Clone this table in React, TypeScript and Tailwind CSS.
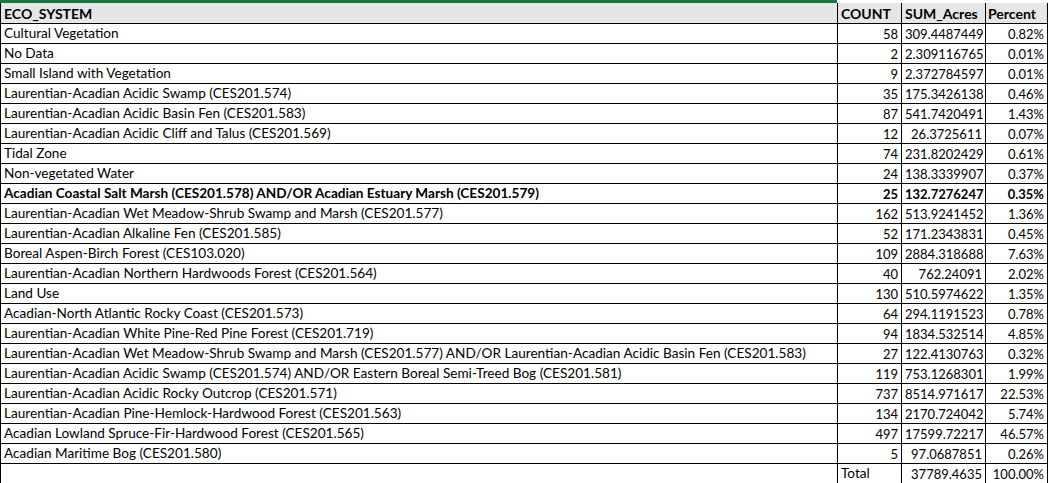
const rows: [string, number, string, string, boolean?][] = [
  ["Cultural Vegetation", 58, "309.4487449", "0.82%"],
  ["No Data", 2, "2.309116765", "0.01%"],
  ["Small Island with Vegetation", 9, "2.372784597", "0.01%"],
  ["Laurentian-Acadian Acidic Swamp (CES201.574)", 35, "175.3426138", "0.46%"],
  ["Laurentian-Acadian Acidic Basin Fen (CES201.583)", 87, "541.7420491", "1.43%"],
  ["Laurentian-Acadian Acidic Cliff and Talus (CES201.569)", 12, "26.3725611", "0.07%"],
  ["Tidal Zone", 74, "231.8202429", "0.61%"],
  ["Non-vegetated Water", 24, "138.3339907", "0.37%"],
  ["Acadian Coastal Salt Marsh (CES201.578) AND/OR Acadian Estuary Marsh (CES201.579)", 25, "132.7276247", "0.35%", true],
  ["Laurentian-Acadian Wet Meadow-Shrub Swamp and Marsh (CES201.577)", 162, "513.9241452", "1.36%"],
  ["Laurentian-Acadian Alkaline Fen (CES201.585)", 52, "171.2343831", "0.45%"],
  ["Boreal Aspen-Birch Forest (CES103.020)", 109, "2884.318688", "7.63%"],
  ["Laurentian-Acadian Northern Hardwoods Forest (CES201.564)", 40, "762.24091", "2.02%"],
  ["Land Use", 130, "510.5974622", "1.35%"],
  ["Acadian-North Atlantic Rocky Coast (CES201.573)", 64, "294.1191523", "0.78%"],
  ["Laurentian-Acadian White Pine-Red Pine Forest (CES201.719)", 94, "1834.532514", "4.85%"],
  ["Laurentian-Acadian Wet Meadow-Shrub Swamp and Marsh (CES201.577) AND/OR Laurentian-Acadian Acidic Basin Fen (CES201.583)", 27, "122.4130763", "0.32%"],
  ["Laurentian-Acadian Acidic Swamp (CES201.574) AND/OR Eastern Boreal Semi-Treed Bog (CES201.581)", 119, "753.1268301", "1.99%"],
  ["Laurentian-Acadian Acidic Rocky Outcrop (CES201.571)", 737, "8514.971617", "22.53%"],
  ["Laurentian-Acadian Pine-Hemlock-Hardwood Forest (CES201.563)", 134, "2170.724042", "5.74%"],
  ["Acadian Lowland Spruce-Fir-Hardwood Forest (CES201.565)", 497, "17599.72217", "46.57%"],
  ["Acadian Maritime Bog (CES201.580)", 5, "97.0687851", "0.26%"],
];

const cell = "border border-black leading-none whitespace-nowrap overflow-hidden pt-[2px] pb-0";

export default function App() {
  return (
    <div className="w-[1050px] h-[483px] bg-white overflow-hidden font-['Lato',sans-serif] text-[13.6px] text-black">
      <div className="w-[837px] h-[3px] bg-[#217346]" />
      <table className="border-collapse table-fixed w-[1047px]">
        <colgroup>
          <col className="w-[837px]" />
          <col className="w-[64px]" />
          <col className="w-[84px]" />
          <col className="w-[62px]" />
        </colgroup>
        <thead>
          <tr className="h-[20px] bg-[#e7e6e6] font-bold text-[14px]">
            <th className={`${cell} border-t-0 px-[3px] text-left`}>ECO_SYSTEM</th>
            <th className={`${cell} border-t-0 px-[3px] text-left`}>COUNT</th>
            <th className={`${cell} border-t-0 px-[3px] text-left`}>SUM_Acres</th>
            <th className={`${cell} border-t-0 px-[2px] text-left`}>Percent</th>
          </tr>
        </thead>
        <tbody>
          {rows.map(([name, count, acres, pct, bold]) => (
            <tr key={name} className={`h-[20px] ${bold ? "font-bold" : ""}`}>
              <td className={`${cell} px-[3px]`}>{name}</td>
              <td className={`${cell} px-[3px] text-right text-[13px]`}>{count}</td>
              <td className={`${cell} px-[3px] text-right text-[13px]`}>{acres}</td>
              <td className={`${cell} px-[3px] text-right text-[13px]`}>{pct}</td>
            </tr>
          ))}
          <tr className="h-[20px]">
            <td className={cell} />
            <td className={`${cell} px-[3px]`}>Total</td>
            <td className={`${cell} px-[3px] text-right text-[13px]`}>37789.4635</td>
            <td className={`${cell} px-[3px] text-right text-[13px]`}>100.00%</td>
          </tr>
        </tbody>
      </table>
    </div>
  );
}
